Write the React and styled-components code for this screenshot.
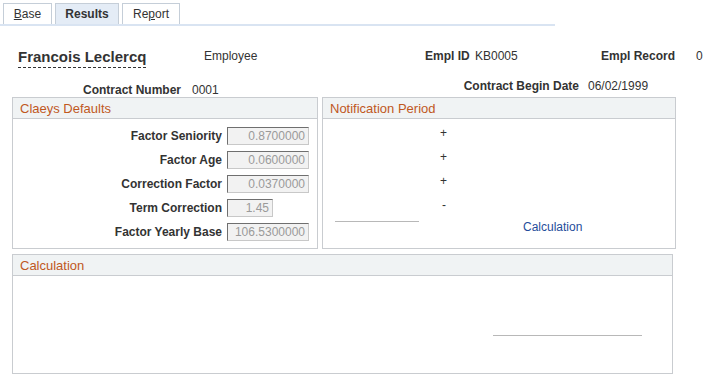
import styled, { createGlobalStyle } from "styled-components";

const Global = createGlobalStyle`
  body {
    margin: 0;
    background: #ffffff;
    font-family: "Liberation Sans", Arial, sans-serif;
    font-size: 12px;
    color: #333333;
  }
`;

const Page = styled.div`
  width: 710px;
  height: 380px;
  overflow: hidden;
`;

const TabBar = styled.div`
  display: flex;
  gap: 3px;
  width: 552px;
  padding: 3px 0 0 3px;
  border-bottom: 2px solid #d9e4f2;
`;

const Tab = styled.div`
  height: 21px;
  width: ${(p) => p.w}px;
  box-sizing: border-box;
  display: flex;
  align-items: center;
  justify-content: center;
  border: 1px solid #c5ced8;
  border-bottom: none;
  background: ${(p) => (p.active ? "#e4ecf6" : "#ffffff")};
  color: #333333;
  font-size: 12px;
  font-weight: ${(p) => (p.active ? "bold" : "normal")};
  u {
    text-decoration: underline;
  }
`;

const InfoRow = styled.div`
  display: flex;
  align-items: center;
  height: 22px;
  margin-top: 19px;
  padding-left: 18px;
`;

const Name = styled.div`
  width: 186px;
  font-size: 15px;
  font-weight: bold;
  color: #333333;
  span {
    border-bottom: 1px dashed #333333;
    padding-bottom: 2px;
  }
`;

const Cell = styled.div`
  width: ${(p) => p.w}px;
  flex-shrink: 0;
  box-sizing: border-box;
  padding-left: ${(p) => p.pl || 0}px;
  margin-top: ${(p) => p.top || 0}px;
  font-weight: ${(p) => (p.bold ? "bold" : "normal")};
  text-align: ${(p) => p.align || "left"};
`;

const ContractRow = styled.div`
  display: flex;
  align-items: flex-start;
  height: 18px;
  margin-top: 12px;
`;

const Panels = styled.div`
  display: flex;
  gap: 4px;
  padding-left: 12px;
`;

const Box = styled.div`
  width: ${(p) => p.w}px;
  height: ${(p) => p.h}px;
  box-sizing: border-box;
  border: 1px solid #c9ccd0;
  background: #ffffff;
  display: flex;
  flex-direction: column;
`;

const BoxHeader = styled.div`
  height: 21px;
  flex-shrink: 0;
  box-sizing: border-box;
  border-bottom: 1px solid #c9ccd0;
  background: #f0f3f4;
  color: #c0581e;
  font-size: 13px;
  padding-left: 7px;
  display: flex;
  align-items: center;
`;

const Fields = styled.div`
  display: flex;
  flex-direction: column;
  gap: 6px;
  padding-top: 8px;
`;

const Field = styled.div`
  display: flex;
  align-items: center;
  gap: 5px;
  label {
    width: 209px;
    text-align: right;
    font-weight: bold;
  }
`;

const ValueBox = styled.div`
  width: ${(p) => p.w}px;
  height: 18px;
  box-sizing: border-box;
  border: 1px solid #c8c8c8;
  border-top-color: #6f6f6f;
  border-left-color: #6f6f6f;
  background: #f2f2f2;
  color: #9a9a9a;
  text-align: right;
  padding-right: 3px;
  line-height: 16px;
`;

const NoticeBody = styled.div`
  display: flex;
  flex-direction: column;
  padding-top: 5px;
`;

const Sign = styled.div`
  height: 24px;
  line-height: 18px;
  padding-left: ${(p) => p.x}px;
  font-size: 12px;
`;

const CalcRow = styled.div`
  display: flex;
  align-items: flex-start;
`;

const Rule = styled.div`
  width: ${(p) => p.w}px;
  height: 0;
  border-top: 1px solid #b8b8b8;
  margin-left: ${(p) => p.x}px;
  margin-top: ${(p) => p.top || 0}px;
`;

const Link = styled.a`
  color: #1f4d9b;
  font-size: 12px;
  margin-left: 104px;
  text-decoration: none;
`;

const CalcWrap = styled.div`
  padding: 5px 0 0 12px;
`;

const CalcBody = styled.div`
  flex: 1;
  display: flex;
  justify-content: flex-end;
  padding-top: 59px;
  padding-right: 30px;
`;

export default function App() {
  const fields = [
    ["Factor Seniority", "0.8700000", 82],
    ["Factor Age", "0.0600000", 82],
    ["Correction Factor", "0.0370000", 82],
    ["Term Correction", "1.45", 46],
    ["Factor Yearly Base", "106.5300000", 82],
  ];
  return (
    <Page>
      <Global />
      <TabBar>
        <Tab w={49}>
          <span>
            <u>B</u>ase
          </span>
        </Tab>
        <Tab w={64} active>
          Results
        </Tab>
        <Tab w={58}>
          <span>
            Re<u>p</u>ort
          </span>
        </Tab>
      </TabBar>

      <InfoRow>
        <Name>
          <span>Francois Leclercq</span>
        </Name>
        <Cell w={221}>Employee</Cell>
        <Cell w={50} bold>
          Empl ID
        </Cell>
        <Cell w={126}>KB0005</Cell>
        <Cell w={95} bold>
          Empl Record
        </Cell>
        <Cell w={14}>0</Cell>
      </InfoRow>

      <ContractRow>
        <Cell w={181} bold align="right" top={4}>
          Contract Number
        </Cell>
        <Cell w={274} pl={11} top={4}>
          0001
        </Cell>
        <Cell w={124} bold align="right">
          Contract Begin Date
        </Cell>
        <Cell w={90} pl={9}>
          06/02/1999
        </Cell>
      </ContractRow>

      <Panels>
        <Box w={306} h={152}>
          <BoxHeader>Claeys Defaults</BoxHeader>
          <Fields>
            {fields.map(([label, value, w]) => (
              <Field key={label}>
                <label>{label}</label>
                <ValueBox w={w}>{value}</ValueBox>
              </Field>
            ))}
          </Fields>
        </Box>
        <Box w={354} h={152}>
          <BoxHeader>Notification Period</BoxHeader>
          <NoticeBody>
            <Sign x={117}>+</Sign>
            <Sign x={117}>+</Sign>
            <Sign x={117}>+</Sign>
            <Sign x={119}>-</Sign>
            <CalcRow>
              <Rule w={84} x={12} top={1} />
              <Link>Calculation</Link>
            </CalcRow>
          </NoticeBody>
        </Box>
      </Panels>

      <CalcWrap>
        <Box w={661} h={120}>
          <BoxHeader>Calculation</BoxHeader>
          <CalcBody>
            <Rule w={149} x={0} />
          </CalcBody>
        </Box>
      </CalcWrap>
    </Page>
  );
}
